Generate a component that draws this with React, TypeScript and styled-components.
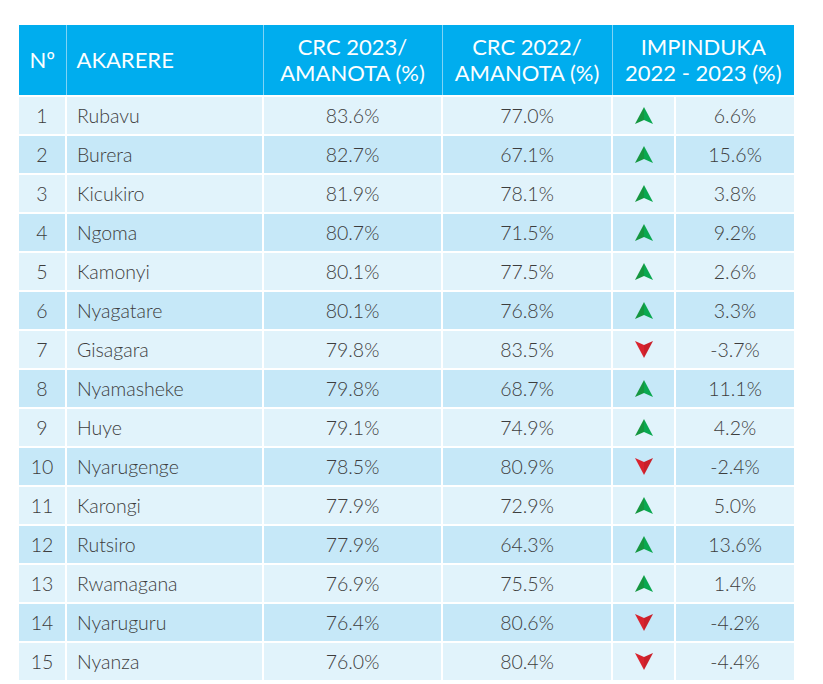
import styled, { createGlobalStyle } from 'styled-components'

const GlobalStyle = createGlobalStyle`
  body {
    margin: 0;
    background: #ffffff;
    font-family: Lato, "Open Sans", sans-serif;
  }
`

const Page = styled.div`
  padding: 25px 0 0 19px;
`

const Table = styled.table`
  width: 775px;
  table-layout: fixed;
  border-collapse: collapse;
  color: #3d3d3d;
`

const HeadCell = styled.th<{ $align?: 'left' | 'center' }>`
  height: 70px;
  padding: 0 ${(p) => (p.$align === 'left' ? '10px' : '0')};
  background: #00adee;
  color: #fbfeff;
  font-size: 22px;
  font-weight: 400;
  line-height: 26px;
  text-align: ${(p) => p.$align ?? 'center'};
  border-left: 1.5px solid #7fd3f5;
  &:first-child {
    border-left: none;
  }
`

const Row = styled.tr<{ $shade: boolean }>`
  height: 39px;
  background: ${(p) => (p.$shade ? '#c6e8f8' : '#e1f3fb')};
`

const Cell = styled.td<{ $align?: 'left' | 'center' }>`
  padding: 0 ${(p) => (p.$align === 'left' ? '10px' : '0')};
  border: 2px solid #ffffff;
  font-size: 19.5px;
  font-weight: 300;
  text-align: ${(p) => p.$align ?? 'center'};
  vertical-align: middle;
  white-space: nowrap;
  &:first-child {
    border-left: none;
  }
  &:last-child {
    border-right: none;
  }
`

const Arrow = styled.svg`
  display: block;
  margin: 0 auto;
  width: 18px;
  height: 17px;
`

function Trend({ up }: { up: boolean }) {
  return up ? (
    <Arrow viewBox="0 0 18 17">
      <path d="M9 0 L18 17 L9 13 Z" fill="#0aa850" />
      <path d="M9 0 L9 13 L0 17 Z" fill="#15963f" />
    </Arrow>
  ) : (
    <Arrow viewBox="0 0 18 17">
      <path d="M0 0 L9 4 L9 17 Z" fill="#d9232e" />
      <path d="M18 0 L9 4 L9 17 Z" fill="#c9202a" />
    </Arrow>
  )
}

const rows: [string, string, string, string][] = [
  ['Rubavu', '83.6%', '77.0%', '6.6%'],
  ['Burera', '82.7%', '67.1%', '15.6%'],
  ['Kicukiro', '81.9%', '78.1%', '3.8%'],
  ['Ngoma', '80.7%', '71.5%', '9.2%'],
  ['Kamonyi', '80.1%', '77.5%', '2.6%'],
  ['Nyagatare', '80.1%', '76.8%', '3.3%'],
  ['Gisagara', '79.8%', '83.5%', '-3.7%'],
  ['Nyamasheke', '79.8%', '68.7%', '11.1%'],
  ['Huye', '79.1%', '74.9%', '4.2%'],
  ['Nyarugenge', '78.5%', '80.9%', '-2.4%'],
  ['Karongi', '77.9%', '72.9%', '5.0%'],
  ['Rutsiro', '77.9%', '64.3%', '13.6%'],
  ['Rwamagana', '76.9%', '75.5%', '1.4%'],
  ['Nyaruguru', '76.4%', '80.6%', '-4.2%'],
  ['Nyanza', '76.0%', '80.4%', '-4.4%'],
]

export default function App() {
  return (
    <Page>
      <GlobalStyle />
      <Table>
        <colgroup>
          <col style={{ width: 47 }} />
          <col style={{ width: 197 }} />
          <col style={{ width: 179 }} />
          <col style={{ width: 170 }} />
          <col style={{ width: 63 }} />
          <col style={{ width: 119 }} />
        </colgroup>
        <thead>
          <tr>
            <HeadCell>Nº</HeadCell>
            <HeadCell $align="left">AKARERE</HeadCell>
            <HeadCell>
              CRC 2023/
              <br />
              AMANOTA (%)
            </HeadCell>
            <HeadCell>
              CRC 2022/
              <br />
              AMANOTA (%)
            </HeadCell>
            <HeadCell colSpan={2}>
              IMPINDUKA
              <br />
              2022 - 2023 (%)
            </HeadCell>
          </tr>
        </thead>
        <tbody>
          {rows.map(([name, a, b, diff], i) => (
            <Row key={name} $shade={i % 2 === 1}>
              <Cell>{i + 1}</Cell>
              <Cell $align="left">{name}</Cell>
              <Cell>{a}</Cell>
              <Cell>{b}</Cell>
              <Cell>
                <Trend up={!diff.startsWith('-')} />
              </Cell>
              <Cell>{diff}</Cell>
            </Row>
          ))}
        </tbody>
      </Table>
    </Page>
  )
}
